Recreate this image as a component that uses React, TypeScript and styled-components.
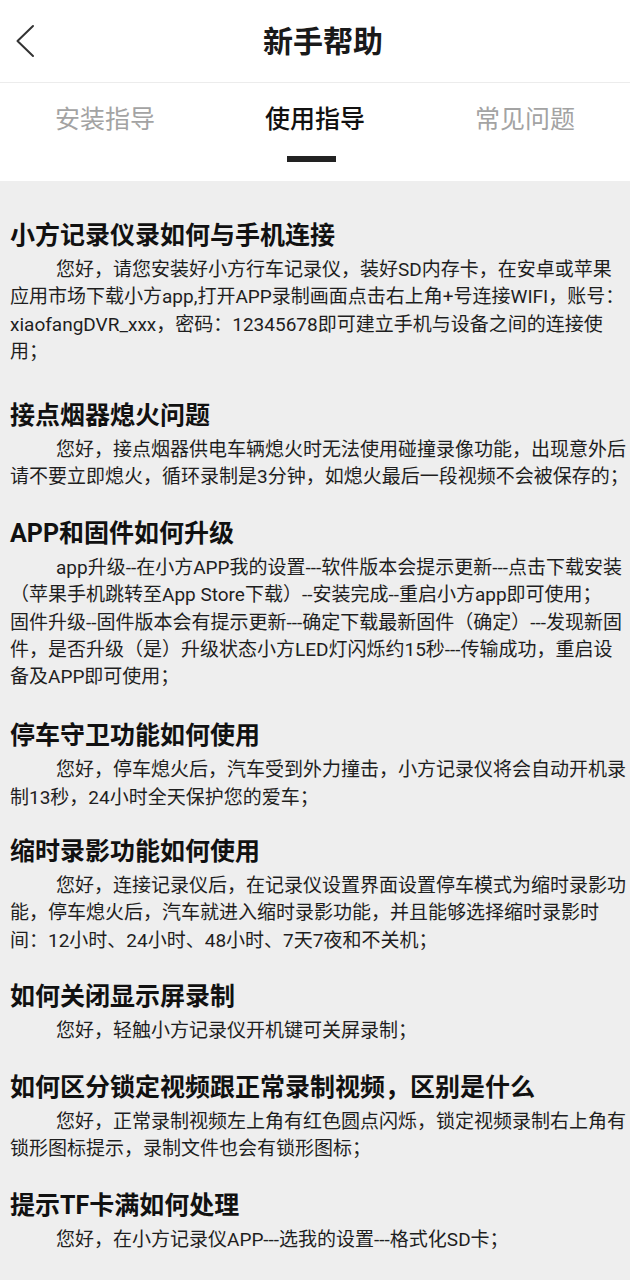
import React from "react";
import styled, { createGlobalStyle } from "styled-components";

const GlobalStyle = createGlobalStyle`
  html, body { margin: 0; padding: 0; }
  body {
    font-family: Roboto, "Noto Sans CJK SC", sans-serif;
    background: #eeeeee;
  }
  * { box-sizing: border-box; }
`;

const Page = styled.div`
  width: 630px;
  min-height: 1280px;
  background: #eeeeee;
  display: flex;
  flex-direction: column;
`;

const Header = styled.header`
  height: 82px;
  background: #ffffff;
  display: grid;
  grid-template-columns: 76px 1fr 60px;
  align-items: center;
  border-bottom: 1px solid #ececec;
  box-sizing: content-box;
`;

const BackButton = styled.button`
  border: 0;
  background: none;
  padding: 0 0 0 15px;
  height: 82px;
  display: flex;
  align-items: center;
  cursor: pointer;
`;

const Title = styled.h1`
  margin: 0;
  padding-top: 2px;
  text-align: center;
  font-size: 30px;
  font-weight: 700;
  color: #1a1a1a;
  line-height: 80px;
`;

const TabBar = styled.nav`
  height: 98px;
  background: #ffffff;
  display: flex;
`;

const Tab = styled.div`
  flex: 1;
  display: flex;
  flex-direction: column;
  align-items: center;
  padding-top: 19px;
  cursor: pointer;
`;

const TabLabel = styled.span<{ $active?: boolean }>`
  font-size: 25px;
  line-height: 36px;
  font-weight: ${(p) => (p.$active ? 500 : 400)};
  color: ${(p) => (p.$active ? "#111111" : "#a3a3a3")};
`;

const Indicator = styled.span<{ $active?: boolean }>`
  margin-top: 18px;
  margin-right: 7px;
  width: 49px;
  height: 6px;
  background: ${(p) => (p.$active ? "#222222" : "transparent")};
`;

const Content = styled.main`
  padding: 35px 0 30px 10px;
  display: flex;
  flex-direction: column;
`;

const Section = styled.section<{ $extra?: number }>`
  margin-bottom: ${(p) => 23.4 + (p.$extra ?? 0)}px;
`;

const SectionTitle = styled.h2`
  margin: 0;
  font-size: 25px;
  line-height: 40px;
  font-weight: 700;
  color: #111111;
`;

const Body = styled.p`
  margin: 0;
  font-size: 19px;
  line-height: 27.3px;
  color: #1e1e1e;
  text-indent: 46px;
`;

const sections: { title: string; body: string[]; extra?: number }[] = [
  {
    title: "小方记录仪录如何与手机连接",
    body: [
      "您好，请您安装好小方行车记录仪，装好SD内存卡，在安卓或苹果应用市场下载小方app,打开APP录制画面点击右上角+号连接WIFI，账号：xiaofangDVR_xxx，密码：12345678即可建立手机与设备之间的连接使用；",
    ],
    extra: 7.4,
  },
  {
    title: "接点烟器熄火问题",
    body: [
      "您好，接点烟器供电车辆熄火时无法使用碰撞录像功能，出现意外后请不要立即熄火，循环录制是3分钟，如熄火最后一段视频不会被保存的；",
    ],
  },
  {
    title: "APP和固件如何升级",
    body: [
      "app升级--在小方APP我的设置---软件版本会提示更新---点击下载安装（苹果手机跳转至App Store下载）--安装完成--重启小方app即可使用；",
      "固件升级--固件版本会有提示更新---确定下载最新固件（确定）---发现新固件，是否升级（是）升级状态小方LED灯闪烁约15秒---传输成功，重启设备及APP即可使用；",
    ],
    extra: 2.6,
  },
  {
    title: "停车守卫功能如何使用",
    body: [
      "您好，停车熄火后，汽车受到外力撞击，小方记录仪将会自动开机录制13秒，24小时全天保护您的爱车；",
    ],
    extra: -2.4,
  },
  {
    title: "缩时录影功能如何使用",
    body: [
      "您好，连接记录仪后，在记录仪设置界面设置停车模式为缩时录影功能，停车熄火后，汽车就进入缩时录影功能，并且能够选择缩时录影时间：12小时、24小时、48小时、7天7夜和不关机；",
    ],
  },
  {
    title: "如何关闭显示屏录制",
    body: ["您好，轻触小方记录仪开机键可关屏录制；"],
  },
  {
    title: "如何区分锁定视频跟正常录制视频，区别是什么",
    body: [
      "您好，正常录制视频左上角有红色圆点闪烁，锁定视频录制右上角有锁形图标提示，录制文件也会有锁形图标；",
    ],
  },
  {
    title: "提示TF卡满如何处理",
    body: ["您好，在小方记录仪APP---选我的设置---格式化SD卡；"],
  },
];

const tabs = ["安装指导", "使用指导", "常见问题"];

export default function App() {
  return (
    <Page>
      <GlobalStyle />
      <Header>
        <BackButton aria-label="返回">
          <svg width="20" height="34" viewBox="0 0 20 34" fill="none">
            <path
              d="M18 2 L2.5 17 L18 32"
              stroke="#333333"
              strokeWidth="2"
              strokeLinecap="round"
              strokeLinejoin="round"
            />
          </svg>
        </BackButton>
        <Title>新手帮助</Title>
        <span />
      </Header>
      <TabBar>
        {tabs.map((t, i) => (
          <Tab key={t}>
            <TabLabel $active={i === 1}>{t}</TabLabel>
            <Indicator $active={i === 1} />
          </Tab>
        ))}
      </TabBar>
      <Content>
        {sections.map((s) => (
          <Section key={s.title} $extra={s.extra}>
            <SectionTitle>{s.title}</SectionTitle>
            <Body>
              {s.body.map((b, i) => (
                <React.Fragment key={i}>
                  {i > 0 && <br />}
                  {b}
                </React.Fragment>
              ))}
            </Body>
          </Section>
        ))}
      </Content>
    </Page>
  );
}
